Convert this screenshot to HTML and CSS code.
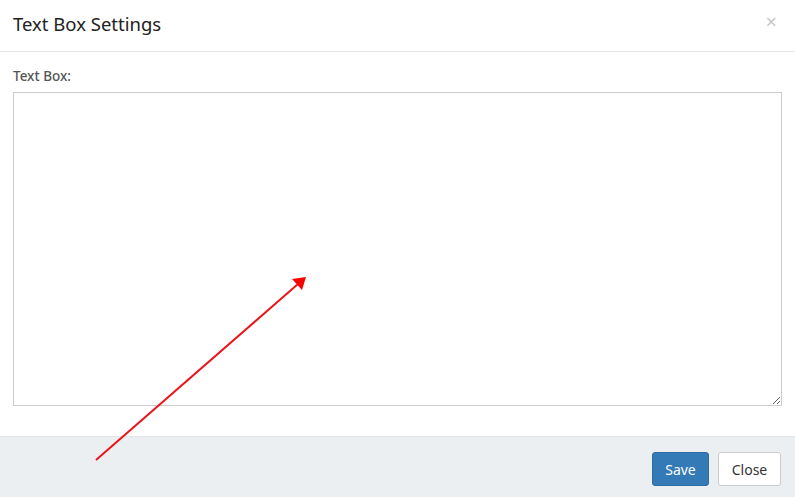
FILE: index.html
```
<!DOCTYPE html>
<html>
<head>
<meta charset="utf-8">
<link rel="stylesheet" href="styles.css">
</head>
<body>
<div class="modal">
  <div class="modal-header">
    <h4 class="modal-title">Text Box Settings</h4>
    <span class="close-x">×</span>
  </div>
  <div class="modal-body">
    <label class="field-label">Text Box:</label>
    <textarea class="text-box"></textarea>
  </div>
  <div class="modal-footer">
    <button class="btn btn-primary">Save</button>
    <button class="btn btn-default">Close</button>
  </div>
  <svg class="arrow" width="795" height="497" viewBox="0 0 795 497">
    <line x1="96" y1="460" x2="298" y2="284" stroke="#e8161b" stroke-width="2"/>
    <polygon points="306,277 292,279 302,290" fill="#f00"/>
  </svg>
</div>
</body>
</html>
```
FILE: styles.css
```
* { box-sizing: border-box; }
html, body { margin: 0; padding: 0; background: #fff; }
body { font-family: "Noto Sans", "Open Sans", sans-serif; color: #333; }
.modal { position: relative; width: 795px; height: 497px; display: flex; flex-direction: column; overflow: hidden; }
.modal-header { height: 52px; border-bottom: 1px solid #e5e5e5; display: flex; align-items: center; justify-content: space-between; padding: 0 13px 5px 13px; }
.modal-title { margin: 0; font-size: 18.5px; font-weight: 400; color: #222; }
.close-x { font-size: 20px; color: #c8c8c8; line-height: 1; margin-right: 5px; margin-top: -2px; }
.modal-body { padding: 14px 13px 30px 13px; display: flex; flex-direction: column; }
.field-label { font-size: 13.5px; font-weight: 500; color: #555; line-height: 20px; margin-bottom: 6px; }
.text-box { width: 769px; height: 314px; border: 1px solid #ccc; border-radius: 0; resize: both; margin: 0; padding: 6px 12px; font-family: inherit; }
.modal-footer { flex: 1; background: #eceff1; border-top: 1px solid #e3e6e8; display: flex; justify-content: flex-end; align-items: flex-start; padding: 15px 14px 0 0; gap: 9px; }
.btn { height: 34px; font-family: inherit; font-size: 14px; border-radius: 3px; padding: 0 12px; cursor: pointer; }
.btn-primary { background: #337ab7; border: 1px solid #2e6da4; color: #fff; width: 57px; }
.btn-default { background: #fff; border: 1px solid #ccc; color: #333; width: 63px; }
.arrow { position: absolute; left: 0; top: 0; pointer-events: none; }
```
